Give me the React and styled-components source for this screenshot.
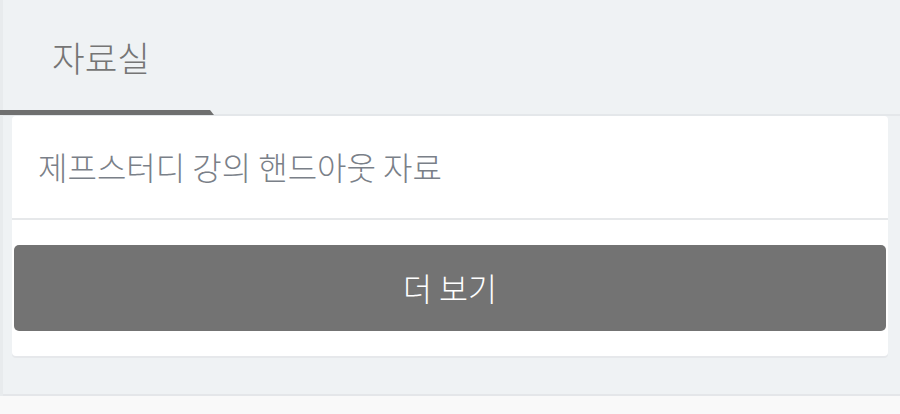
import React from "react";
import styled, { createGlobalStyle } from "styled-components";

const Global = createGlobalStyle`
  html, body { margin: 0; padding: 0; background: #eff2f4; }
  body { font-family: "Noto Sans CJK KR", "Noto Sans", sans-serif; }
  #root { height: 414px; overflow: hidden; }
`;

const Page = styled.div`
  height: 414px;
  display: flex;
  flex-direction: column;
  background: #eff2f4;
`;

const Body = styled.div`
  display: flex;
  flex-direction: column;
  border-left: 3px solid #e8ebed;
`;

const TabBar = styled.div`
  height: 116px;
  display: flex;
  align-items: stretch;
  border-bottom: 2px solid #e4e7ea;
  box-sizing: border-box;
`;

const Tab = styled.div`
  position: relative;
  width: 211px;
  display: flex;
  align-items: center;
  padding-left: 49px;
  padding-bottom: 2px;
  box-sizing: border-box;
  font-size: 35.5px;
  font-weight: 300;
  color: #757575;
  &::after {
    content: "";
    position: absolute;
    left: -3px;
    right: 0;
    bottom: -1px;
    height: 5px;
    background: #6f6f6f;
    clip-path: polygon(0 0, calc(100% - 4px) 0, 100% 100%, 0 100%);
  }
`;

const Content = styled.div`
  padding: 0 12px 0 9px;
  height: 280px;
  box-sizing: border-box;
  border-bottom: 2px solid #e4e6e9;
`;

const Card = styled.div`
  background: #ffffff;
  border-radius: 4px;
  box-shadow: 0 2px 0 #e6e8eb;
  display: flex;
  flex-direction: column;
  padding: 0 2px 25px;
`;

const Item = styled.div`
  height: 104px;
  display: flex;
  align-items: center;
  padding-left: 26px;
  padding-bottom: 2px;
  box-sizing: border-box;
  font-size: 32px;
  font-weight: 300;
  color: #7a8088;
  border-bottom: 2px solid #e6e8ea;
  margin: 0 -2px;
`;

const MoreButton = styled.button`
  margin-top: 25px;
  height: 86px;
  border: none;
  border-radius: 5px;
  background: #737373;
  color: #ffffff;
  font-family: inherit;
  font-size: 31.5px;
  font-weight: 300;
  padding-bottom: 4px;
`;

const Footer = styled.div`
  flex: 1;
  background: #f9f9f9;
`;

export default function App() {
  return (
    <>
      <Global />
      <Page>
        <Body>
          <TabBar>
            <Tab>자료실</Tab>
          </TabBar>
          <Content>
            <Card>
              <Item>제프스터디 강의 핸드아웃 자료</Item>
              <MoreButton>더 보기</MoreButton>
            </Card>
          </Content>
        </Body>
        <Footer />
      </Page>
    </>
  );
}
